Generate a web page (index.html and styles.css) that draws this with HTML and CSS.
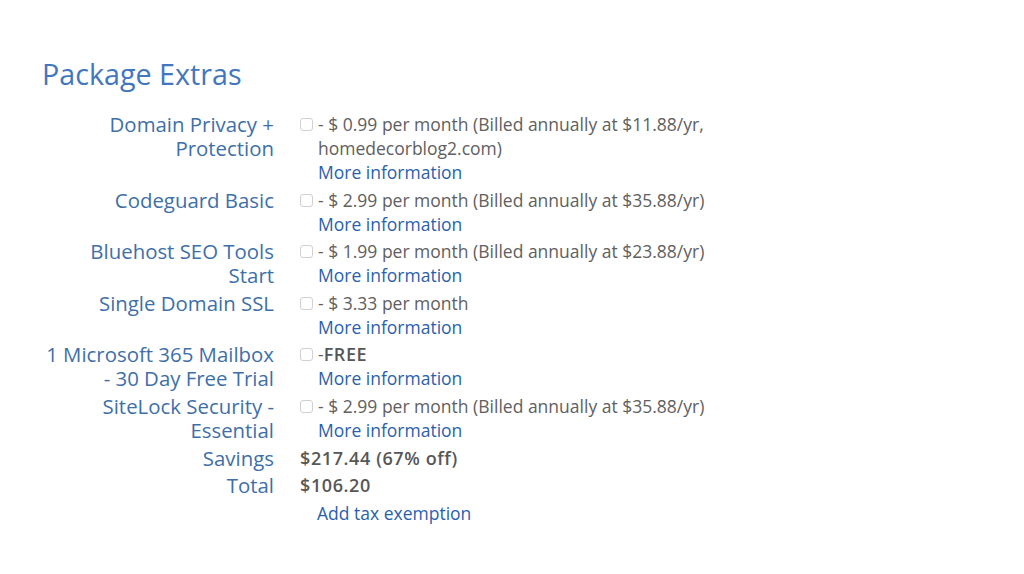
FILE: index.html
```html
<!DOCTYPE html>
<html lang="en">
<head>
    <meta charset="UTF-8">
    <title>Package Extras</title>
    <link rel="stylesheet" href="styles.css">
</head>
<body>

    <div class="extras">
        <h2>Package Extras</h2>

        <div class="extras-grid">
            <div class="label">Domain Privacy + Protection</div>
            <div class="value">
                <span class="box"></span>- $ 0.99 per month (Billed annually at $11.88/yr, homedecorblog2.com)<br>
                <a href="#">More information</a>
            </div>

            <div class="label">Codeguard Basic</div>
            <div class="value">
                <span class="box"></span>- $ 2.99 per month (Billed annually at $35.88/yr)<br>
                <a href="#">More information</a>
            </div>

            <div class="label">Bluehost SEO Tools Start</div>
            <div class="value">
                <span class="box"></span>- $ 1.99 per month (Billed annually at $23.88/yr)<br>
                <a href="#">More information</a>
            </div>

            <div class="label">Single Domain SSL</div>
            <div class="value">
                <span class="box"></span>- $ 3.33 per month<br>
                <a href="#">More information</a>
            </div>

            <div class="label">1 Microsoft 365 Mailbox - 30 Day Free Trial</div>
            <div class="value">
                <span class="box"></span>-<strong>FREE</strong><br>
                <a href="#">More information</a>
            </div>

            <div class="label">SiteLock Security - Essential</div>
            <div class="value">
                <span class="box"></span>- $ 2.99 per month (Billed annually at $35.88/yr)<br>
                <a href="#">More information</a>
            </div>

            <div class="label">Savings</div>
            <div class="value plain"><strong>$217.44 (67% off)</strong></div>

            <div class="label">Total</div>
            <div class="value plain"><strong>$106.20</strong></div>

            <div class="label"></div>
            <div class="value tax"><a href="#">Add tax exemption</a></div>
        </div>
    </div>

</body>
</html>
```

FILE: styles.css
```css
body {
    margin: 0;
    background-color: #fff;
    font-family: "Open Sans", "Liberation Sans", sans-serif;
}

.extras {
    padding: 54px 0 0 42px;
}

h2 {
    margin: 0 0 18px 0;
    font-size: 28.7px;
    font-weight: normal;
    line-height: 40px;
    color: #4277bd;
}

.extras-grid {
    display: grid;
    grid-template-columns: 232px 410px;
    column-gap: 26px;
    row-gap: 3.6px;
}

.label {
    text-align: right;
    font-size: 20.4px;
    line-height: 24px;
    color: #3e6fa8;
}

.value {
    position: relative;
    padding-left: 18px;
    font-size: 17.5px;
    line-height: 24px;
    color: #606060;
}

.value a {
    color: #2a5fae;
    text-decoration: none;
}

.value strong {
    font-size: 18px;
    font-weight: 600;
    letter-spacing: 0.6px;
    color: #575757;
}

.box {
    position: absolute;
    left: 0;
    top: 6px;
    width: 11px;
    height: 11px;
    border: 1px solid #d0d0d0;
    border-radius: 3px;
}

.plain {
    padding-left: 0;
}

.tax {
    padding-left: 17px;
}
```
